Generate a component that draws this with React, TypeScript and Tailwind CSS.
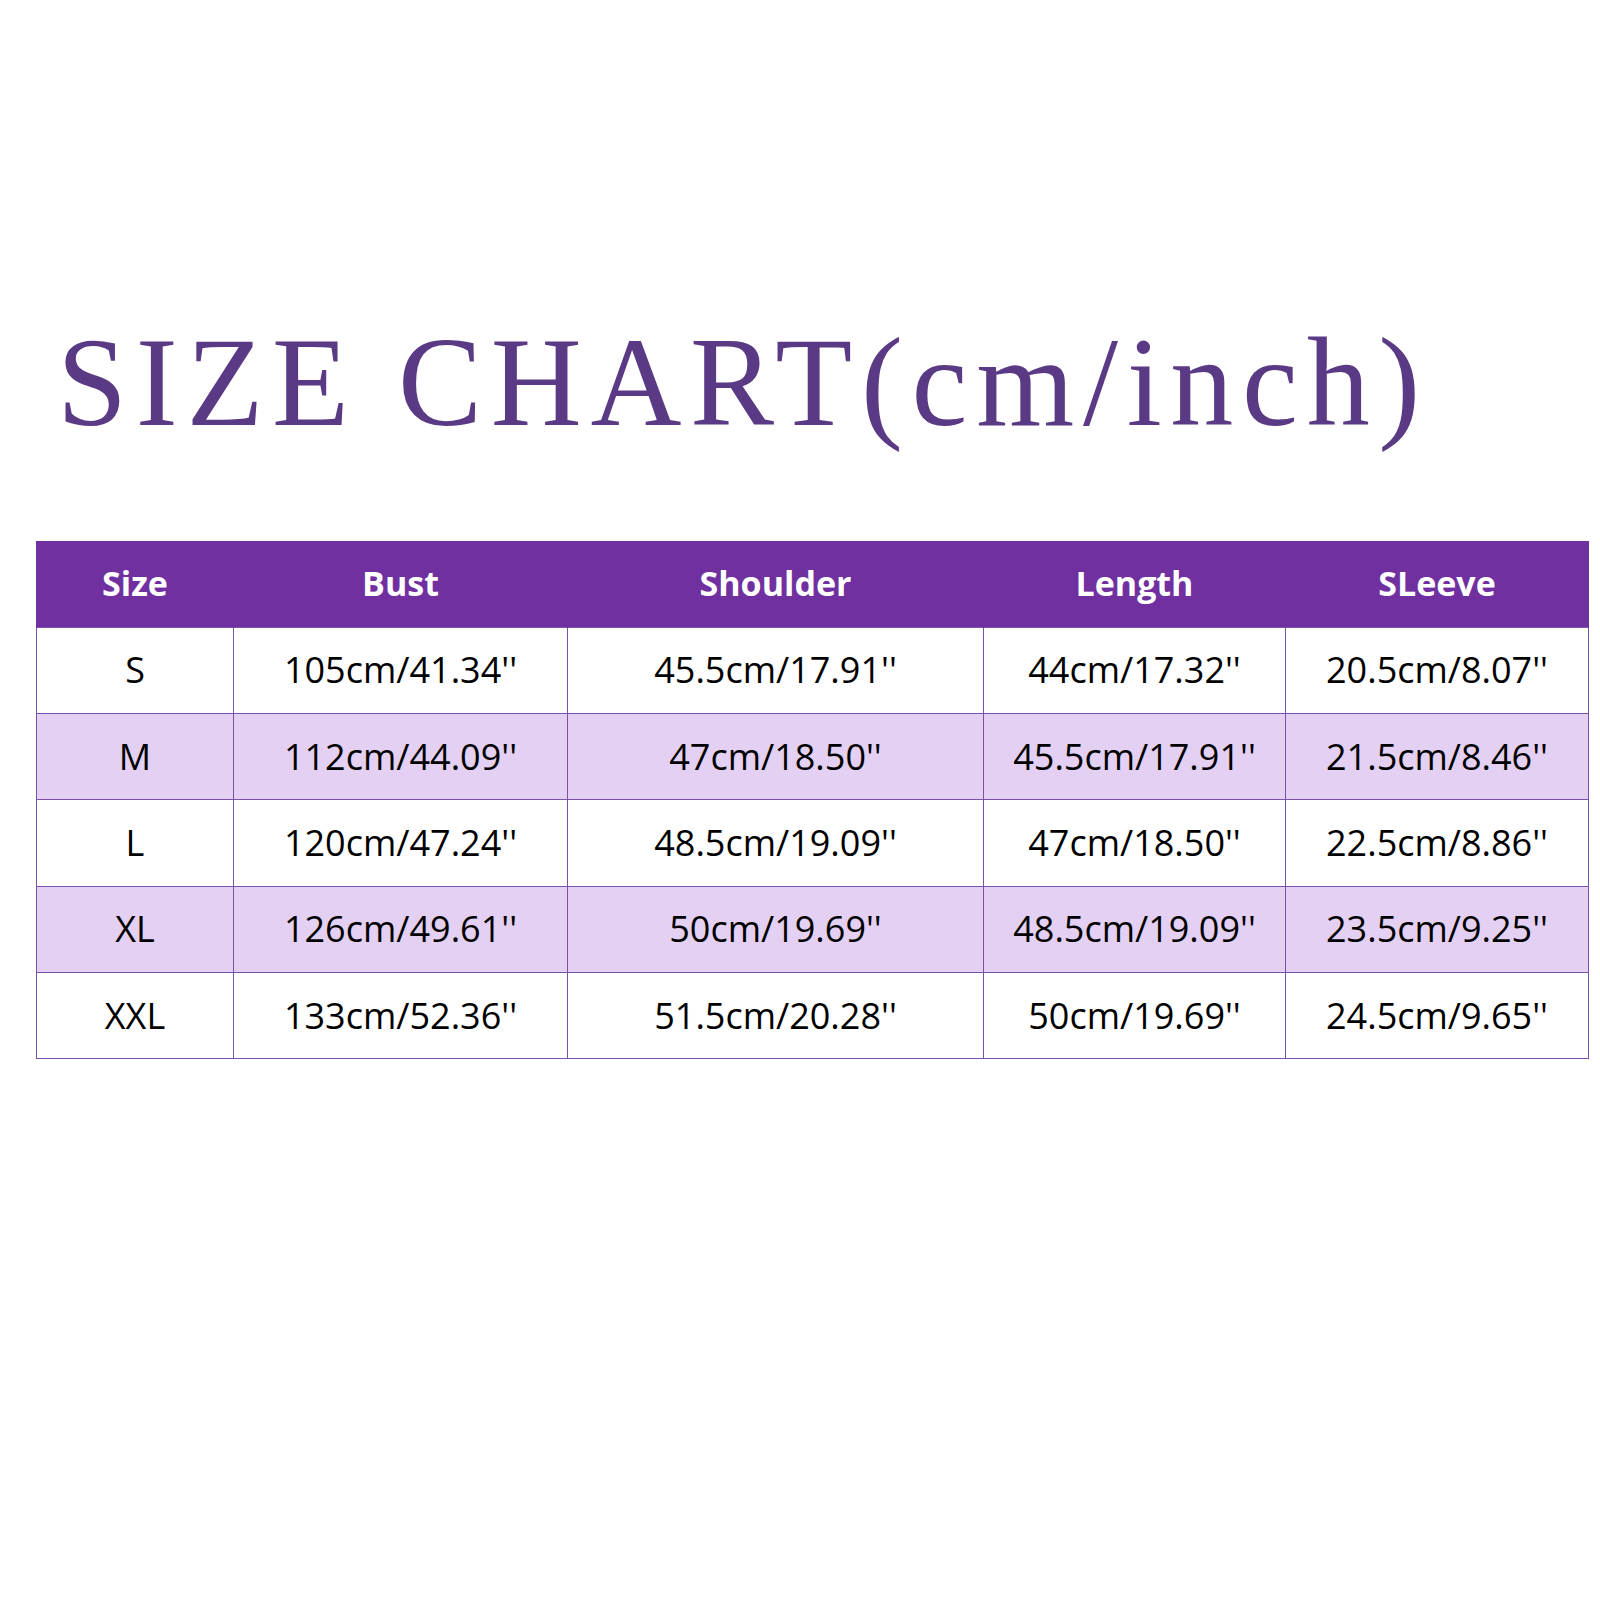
import React from 'react'

const COLUMNS = ['Size', 'Bust', 'Shoulder', 'Length', 'SLeeve']

const WIDTHS = ['w-[197px]', 'w-[334px]', 'w-[416px]', 'w-[302px]', 'w-[303px]']

const ROWS = [
  ['S', "105cm/41.34''", "45.5cm/17.91''", "44cm/17.32''", "20.5cm/8.07''"],
  ['M', "112cm/44.09''", "47cm/18.50''", "45.5cm/17.91''", "21.5cm/8.46''"],
  ['L', "120cm/47.24''", "48.5cm/19.09''", "47cm/18.50''", "22.5cm/8.86''"],
  ['XL', "126cm/49.61''", "50cm/19.69''", "48.5cm/19.09''", "23.5cm/9.25''"],
  ['XXL', "133cm/52.36''", "51.5cm/20.28''", "50cm/19.69''", "24.5cm/9.65''"],
]

export default function App() {
  return (
    <div className="h-[1600px] w-[1600px] bg-white">
      <h1 className="ml-[57px] pt-[320px] text-[126px] leading-none font-normal tracking-[8.7px] text-[#5b3a85] [font-family:'Liberation_Serif',serif]">
        SIZE CHART(cm/inch)
      </h1>

      <table className="mt-[95px] ml-[36px] w-[1552px] table-fixed border-collapse [font-family:'Open_Sans',sans-serif]">
        <thead>
          <tr className="h-[86px] bg-[#7030a0]">
            {COLUMNS.map((col, i) => (
              <th key={col} className={`${WIDTHS[i]} border-x border-[#7030a0] p-0 text-center text-[34px] font-bold text-white`}>
                {col}
              </th>
            ))}
          </tr>
        </thead>
        <tbody>
          {ROWS.map((row, r) => (
            <tr key={row[0]} className={`h-[86.4px] ${r % 2 === 1 ? 'bg-[#e3d0f2]' : 'bg-white'}`}>
              {row.map((cell, i) => (
                <td key={i} className="border border-[#7a52a8] p-0 text-center text-[36px] text-black">
                  {cell}
                </td>
              ))}
            </tr>
          ))}
        </tbody>
      </table>
    </div>
  )
}
